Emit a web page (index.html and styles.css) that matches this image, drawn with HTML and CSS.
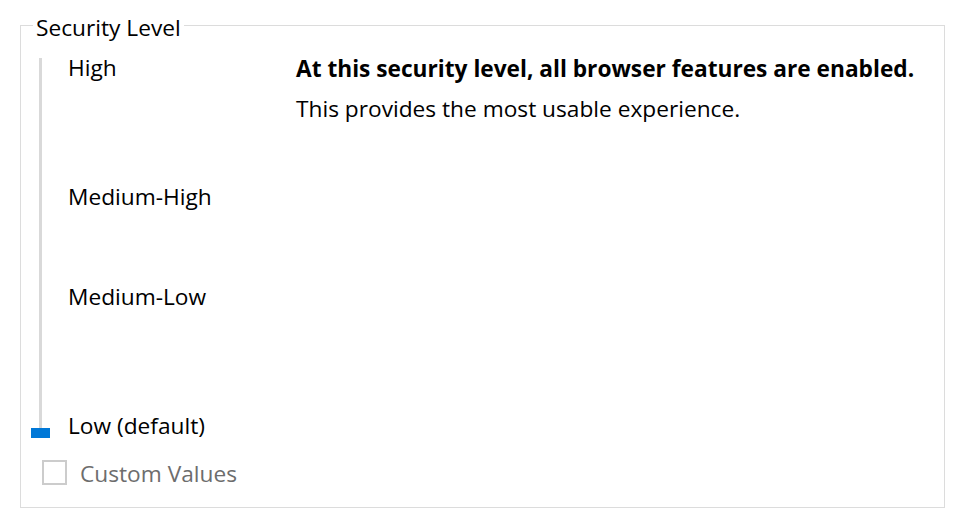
FILE: index.html
```html
<!DOCTYPE html>
<html>
<head>
<meta charset="utf-8">
<link rel="stylesheet" href="styles.css">
</head>
<body>
<fieldset class="group">
  <legend class="legend">Security Level</legend>
  <div class="content">
    <div class="slider">
      <div class="track"><div class="thumb"></div></div>
    </div>
    <div class="levels">
      <div class="level level-high">High</div>
      <div class="level level-mh">Medium-High</div>
      <div class="level level-ml">Medium-Low</div>
      <div class="level level-low">Low (default)</div>
    </div>
    <div class="desc">
      <div class="desc-title">At this security level, all browser features are enabled.</div>
      <div class="desc-text">This provides the most usable experience.</div>
    </div>
  </div>
  <label class="custom">
    <span class="checkbox"></span>
    <span class="custom-text">Custom Values</span>
  </label>
</fieldset>
</body>
</html>
```

FILE: styles.css
```css
html, body {
  margin: 0;
  padding: 0;
  background: #ffffff;
}
body {
  font-family: "Open Sans", "Noto Sans", sans-serif;
  font-size: 22.7px;
  color: #000;
  padding: 10px 20px 0 20px;
}
.group {
  margin: 0;
  width: 925px;
  height: 498px;
  box-sizing: border-box;
  border: 1px solid #dcdcdc;
  padding: 0;
}
.legend {
  margin-left: 12px;
  padding: 6px 3px 0 3px;
  line-height: 24px;
}
.content {
  display: flex;
  height: 386px;
  margin-top: 14px;
}
.slider {
  width: 47px;
  display: flex;
  justify-content: flex-start;
}
.track {
  width: 3px;
  background: #d9d9d9;
  margin-top: 4px;
  margin-left: 18px;
  height: 380px;
  position: relative;
}
.thumb {
  position: absolute;
  left: -8px;
  bottom: 0;
  width: 19px;
  height: 10px;
  background: #0078d7;
}
.levels {
  width: 228px;
}
.level {
  line-height: 28px;
  white-space: nowrap;
}
.level-high { margin-top: 0; }
.level-mh { margin-top: 101px; }
.level-ml { margin-top: 72px; }
.level-low { margin-top: 101px; }
.desc {
  flex: 1;
  padding-top: 1px;
}
.desc-title {
  font-weight: bold;
  line-height: 28px;
  white-space: nowrap;
}
.desc-text {
  margin-top: 12px;
  line-height: 28px;
}
.custom {
  display: flex;
  align-items: flex-start;
  margin-left: 21px;
  margin-top: 20px;
  line-height: 28px;
  color: #6d6d6d;
}
.checkbox {
  width: 21px;
  height: 21px;
  border: 2px solid #cccccc;
  margin-right: 13px;
}
.custom-text {
  margin-top: 0;
}
```
